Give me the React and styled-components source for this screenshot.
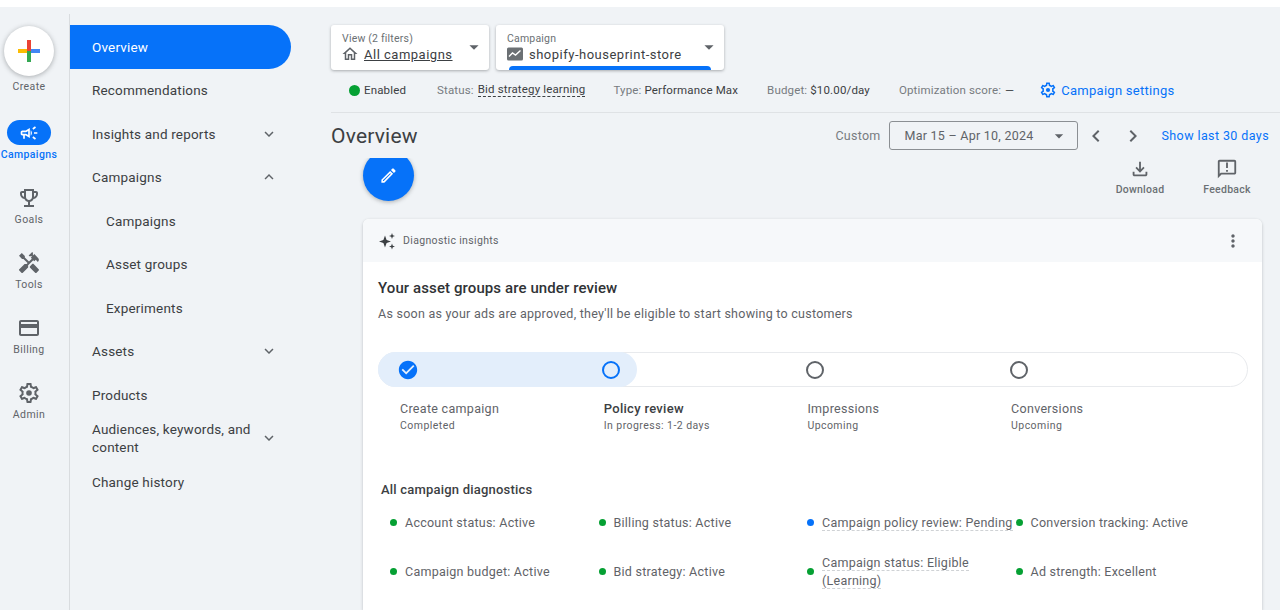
import React from "react";
import styled, { createGlobalStyle } from "styled-components";
import {
  MdArrowDropDown,
  MdCheckCircle,
  MdChevronLeft,
  MdChevronRight,
  MdHandyman,
  MdKeyboardArrowDown,
  MdKeyboardArrowUp,
  MdMoreVert,
  MdOutlineAnnouncement,
  MdOutlineCampaign,
  MdOutlineCreditCard,
  MdOutlineEdit,
  MdOutlineEmojiEvents,
  MdOutlineFileDownload,
  MdOutlineHome,
} from "react-icons/md";

const BLUE = "#0672f9";
const GREEN = "#05a033";

const GlobalStyle = createGlobalStyle`
  html, body {
    margin: 0;
    height: 610px;
    overflow: hidden;
    background: #ffffff;
    font-family: Roboto, "Liberation Sans", sans-serif;
    color: #3c4043;
  }
  * { box-sizing: border-box; }
`;

const Page = styled.div`
  display: flex;
  height: 603px;
  margin-top: 7px;
  background: #f0f3f6;
`;

const Rail = styled.aside`
  width: 70px;
  flex: none;
  display: flex;
  flex-direction: column;
  align-items: center;
  margin-top: 7px;
  padding: 12px 11px 0 0;
  border-right: 1px solid #d9dcdf;
`;

const CreateCircle = styled.div`
  width: 50px;
  height: 50px;
  flex: none;
  border-radius: 50%;
  background: #fff;
  box-shadow: 0 1px 5px rgba(60, 64, 67, 0.4);
  display: flex;
  align-items: center;
  justify-content: center;
`;

const RailLabel = styled.span`
  font-size: 10.5px;
  line-height: 14px;
  letter-spacing: 0.4px;
  white-space: nowrap;
  font-weight: ${(p) => (p.$active ? 500 : 400)};
  color: ${(p) => (p.$active ? BLUE : "#5f6368")};
`;

const CreateItem = styled.div`
  display: flex;
  flex-direction: column;
  align-items: center;
  gap: 4px;
`;

const RailItem = styled.div`
  height: 65px;
  display: flex;
  flex-direction: column;
  align-items: center;
  justify-content: flex-end;
  gap: 3px;
  color: #5f6368;
  font-size: 24px;
  & > svg { display: block; }
`;

const RailGroup = styled.div`
  display: flex;
  flex-direction: column;
  padding-top: 3px;
`;

const ActivePill = styled.div`
  width: 44px;
  height: 25px;
  border-radius: 13px;
  background: ${BLUE};
  color: #fff;
  display: flex;
  align-items: center;
  justify-content: center;
  font-size: 20px;
`;

const Nav = styled.nav`
  width: 261px;
  flex: none;
  padding-top: 18px;
  display: flex;
  flex-direction: column;
`;

const NavRow = styled.div`
  width: 221px;
  height: 43.5px;
  flex: none;
  display: flex;
  align-items: center;
  justify-content: space-between;
  padding: 0 13px 0 ${(p) => (p.$sub ? 36 : 22)}px;
  font-size: 13.5px;
  line-height: 18px;
  letter-spacing: 0.18px;
  font-weight: 400;
  color: ${(p) => (p.$active ? "#fff" : "#3c4043")};
  background: ${(p) => (p.$active ? BLUE : "transparent")};
  border-radius: ${(p) => (p.$active ? "0 22px 22px 0" : "0")};
  & > svg { flex: none; font-size: 18px; color: #5f6368; }
`;

const NavWrap = styled.span`
  width: 170px;
`;

const Main = styled.main`
  flex: 1;
  min-width: 0;
  display: flex;
  flex-direction: column;
`;

const Selectors = styled.div`
  display: flex;
  gap: 7px;
  padding-top: 18px;
`;

const Selector = styled.div`
  position: relative;
  overflow: hidden;
  width: ${(p) => p.$width}px;
  height: 45px;
  background: #fff;
  border-radius: 3px;
  box-shadow: 0 1px 3px rgba(60, 64, 67, 0.4);
  padding: 7px 0 0 11px;
  & > svg {
    position: absolute;
    right: 4px;
    top: 11px;
    font-size: 22px;
    color: #5f6368;
  }
`;

const SelectorLabel = styled.div`
  font-size: 10.5px;
  line-height: 13px;
  letter-spacing: 0.2px;
  color: #6b7074;
`;

const SelectorValue = styled.div`
  display: flex;
  align-items: center;
  gap: 5px;
  height: 18px;
  font-size: 13px;
  letter-spacing: 0.5px;
  font-weight: 400;
  color: #3c4043;
  & > svg { flex: none; color: #5f6368; font-size: 18px; margin-left: -1px; }
`;

const Underlined = styled.span`
  text-decoration: underline;
`;

const ActiveBar = styled.div`
  position: absolute;
  left: 13px;
  right: 13px;
  bottom: 0;
  height: 4px;
  border-radius: 4px 4px 0 0;
  background: ${BLUE};
`;

const StatusBar = styled.div`
  height: 43px;
  display: flex;
  align-items: center;
  padding: 0 0 2px 18px;
  border-bottom: 1px solid #dfe2e5;
  font-size: 11.5px;
  letter-spacing: 0.15px;
  color: #777b80;
`;

const StatusItem = styled.div`
  display: flex;
  align-items: center;
  gap: ${(p) => p.$inner}px;
  margin-right: ${(p) => p.$gap}px;
  white-space: pre;
`;

const EnabledDot = styled.span`
  width: 11px;
  height: 11px;
  border-radius: 50%;
  background: ${GREEN};
`;

const StatusValue = styled.span`
  color: #3c4043;
  ${(p) => p.$dotted && "border-bottom: 1px dashed #3c4043; line-height: 13px;"}
`;

const SettingsLink = styled.div`
  display: flex;
  align-items: center;
  gap: 4px;
  font-size: 13px;
  font-weight: 400;
  letter-spacing: 0.27px;
  color: ${BLUE};
`;

const TitleRow = styled.div`
  height: 45px;
  display: flex;
  align-items: center;
  padding-right: 11px;
`;

const PageTitle = styled.h1`
  flex: 1;
  margin: 0;
  font-size: 21px;
  font-weight: 400;
  letter-spacing: 0.2px;
  color: #3c4043;
`;

const CustomLabel = styled.span`
  font-size: 12.5px;
  letter-spacing: 0.25px;
  color: #777b80;
  margin-right: 8px;
`;

const DateBox = styled.div`
  width: 189px;
  height: 29px;
  border: 1px solid #8b8f93;
  border-radius: 3px;
  display: flex;
  align-items: center;
  justify-content: space-between;
  padding: 0 12px 0 15px;
  font-size: 12.5px;
  letter-spacing: 0.25px;
  color: #5f6368;
  & > svg { font-size: 20px; margin-right: -4px; }
`;

const Pager = styled.div`
  display: flex;
  gap: 13px;
  margin: 0 17px 0 6px;
  color: #5f6368;
  font-size: 24px;
  & > svg { display: block; }
`;

const LastDays = styled.span`
  font-size: 12.5px;
  font-weight: 400;
  letter-spacing: 0.4px;
  color: ${BLUE};
`;

const ActionRow = styled.div`
  height: 61px;
  display: flex;
  justify-content: space-between;
  padding: 0 25px 0 27px;
`;

const FabClip = styled.div`
  width: 61px;
  height: 51px;
  padding: 0 5px;
  overflow: hidden;
  flex: none;
`;

const Fab = styled.div`
  width: 51px;
  height: 51px;
  margin-top: -8px;
  border-radius: 50%;
  background: ${BLUE};
  box-shadow: 0 1px 4px rgba(60, 64, 67, 0.4);
  color: #fff;
  display: flex;
  align-items: center;
  justify-content: center;
  font-size: 19px;
`;

const Actions = styled.div`
  display: flex;
  gap: 31px;
`;

const ActionButton = styled.div`
  width: 56px;
  display: flex;
  flex-direction: column;
  align-items: center;
  gap: 3px;
  font-size: 10.5px;
  line-height: 14px;
  font-weight: 500;
  letter-spacing: 0.25px;
  color: #6b7074;
  & > svg { font-size: 22px; color: #5f6368; display: block; }
`;

const Card = styled.section`
  margin: 0 18px 0 32px;
  flex: 1;
  background: #fff;
  border-radius: 6px 6px 0 0;
  box-shadow: 0 1px 3px rgba(60, 64, 67, 0.3);
  overflow: hidden;
`;

const CardHeader = styled.header`
  height: 43px;
  background: #f6f8fa;
  display: flex;
  align-items: center;
  padding: 0 23px 0 15px;
  gap: 7px;
  font-size: 10.5px;
  letter-spacing: 0.35px;
  color: #5f6368;
`;

const HeaderSpacer = styled.span`
  flex: 1;
`;

const MoreIcon = styled(MdMoreVert)`
  font-size: 20px;
  color: #5f6368;
  margin-right: -4px;
`;

const CardBody = styled.div`
  padding: 16px 14px 0 15px;
`;

const CardTitle = styled.h2`
  margin: 0;
  font-size: 15px;
  line-height: 20px;
  font-weight: 500;
  letter-spacing: 0.1px;
  color: #303336;
`;

const CardText = styled.p`
  margin: 6px 0 0;
  font-size: 12.5px;
  line-height: 20px;
  letter-spacing: 0.25px;
  color: #5f6368;
`;

const Stepper = styled.div`
  position: relative;
  margin-top: 28px;
  height: 35px;
  border-radius: 18px;
  border: 1px solid #e8eaed;
  display: grid;
  grid-template-columns: repeat(4, 203.7px);
  padding-left: 19.5px;
  align-items: center;
`;

const StepFill = styled.div`
  position: absolute;
  left: -1px;
  top: -1px;
  bottom: -1px;
  width: 259px;
  border-radius: 18px;
  background: #e3eefb;
`;

const StepCell = styled.div`
  position: relative;
  display: flex;
  align-items: center;
  height: 20px;
`;

const StepCheck = styled(MdCheckCircle)`
  font-size: 22px;
  margin-left: -1.5px;
  color: ${BLUE};
`;

const StepCircle = styled.span`
  width: 18px;
  height: 18px;
  border-radius: 50%;
  border: 2px solid ${(p) => (p.$active ? BLUE : "#5f6368")};
`;

const StepLabels = styled.div`
  display: grid;
  grid-template-columns: repeat(4, 203.7px);
  padding-left: 22px;
  margin-top: 13px;
`;

const StepName = styled.div`
  font-size: ${(p) => (p.$active ? 13 : 12.5)}px;
  line-height: 18px;
  letter-spacing: 0.3px;
  font-weight: ${(p) => (p.$active ? 500 : 400)};
  color: ${(p) => (p.$active ? "#3c4043" : "#5f6368")};
`;

const StepNote = styled.div`
  margin-top: 1px;
  font-size: 10.5px;
  line-height: 14px;
  letter-spacing: 0.45px;
  color: #5f6368;
`;

const DiagTitle = styled.h3`
  margin: 49px 0 0 3px;
  font-size: 13px;
  line-height: 16px;
  font-weight: 500;
  letter-spacing: 0.2px;
  color: #3c4043;
`;

const DiagGrid = styled.div`
  display: grid;
  grid-template-columns: repeat(4, 208.5px);
  grid-auto-rows: 49px;
  margin-left: 12px;
`;

const DiagItem = styled.div`
  display: flex;
  align-items: center;
  gap: 8px;
  font-size: 12.5px;
  line-height: 18px;
  letter-spacing: 0.25px;
  color: #5f6368;
`;

const DiagDot = styled.span`
  flex: none;
  width: 7px;
  height: 7px;
  border-radius: 50%;
  background: ${(p) => (p.$pending ? BLUE : GREEN)};
`;

const DiagText = styled.span`
  white-space: ${(p) => (p.$wrap ? "normal" : "nowrap")};
  width: ${(p) => (p.$wrap ? "165px" : "auto")};
`;

const Dotted = styled.span`
  border-bottom: 1px dashed #cfd2d5;
`;

const PlusLogo = () => (
  <svg width="24" height="24" viewBox="0 0 24 24">
    <rect x="1" y="10" width="11" height="4" fill="#fbbc04" />
    <rect x="12" y="10" width="11" height="4" fill="#4285f4" />
    <rect x="10" y="1" width="4" height="11" fill="#ea4335" />
    <rect x="10" y="12" width="4" height="11" fill="#34a853" />
  </svg>
);

// outlined gear with a solid hub, the package only has it with an empty one
const GearIcon = ({ size = 24 }) => (
  <svg width={size} height={size} viewBox="0 0 24 24" fill="currentColor">
    <path d="M19.43 12.98c.04-.32.07-.64.07-.98 0-.34-.03-.66-.07-.98l2.11-1.65c.19-.15.24-.42.12-.64l-2-3.46c-.09-.16-.26-.25-.44-.25-.06 0-.12.01-.17.03l-2.49 1c-.52-.4-1.08-.73-1.69-.98l-.38-2.65C14.46 2.18 14.25 2 14 2h-4c-.25 0-.46.18-.49.42l-.38 2.65c-.61.25-1.17.59-1.69.98l-2.49-1c-.06-.02-.12-.03-.18-.03-.17 0-.34.09-.43.25l-2 3.46c-.13.22-.07.49.12.64l2.11 1.65c-.04.32-.07.65-.07.98 0 .33.03.66.07.98l-2.11 1.65c-.19.15-.24.42-.12.64l2 3.46c.09.16.26.25.44.25.06 0 .12-.01.17-.03l2.49-1c.52.4 1.08.73 1.69.98l.38 2.65c.03.24.24.42.49.42h4c.25 0 .46-.18.49-.42l.38-2.65c.61-.25 1.17-.59 1.69-.98l2.49 1c.06.02.12.03.18.03.17 0 .34-.09.43-.25l2-3.46c.12-.22.07-.49-.12-.64l-2.11-1.65zm-1.98-1.71c.04.31.05.52.05.73 0 .21-.02.43-.05.73l-.14 1.13.89.7 1.08.84-.7 1.21-1.27-.51-1.04-.42-.9.68c-.43.32-.84.56-1.25.73l-1.06.43-.16 1.13-.2 1.35h-1.4l-.19-1.35-.16-1.13-1.06-.43c-.43-.18-.83-.41-1.23-.71l-.91-.7-1.06.43-1.27.51-.7-1.21 1.08-.84.89-.7-.14-1.13c-.03-.31-.05-.54-.05-.74s.02-.43.05-.73l.14-1.13-.89-.7-1.08-.84.7-1.21 1.27.51 1.04.42.9-.68c.43-.32.84-.56 1.25-.73l1.06-.43.16-1.13.2-1.35h1.39l.19 1.35.16 1.13 1.06.43c.43.18.83.41 1.23.71l.91.7 1.06-.43 1.27-.51.7 1.21-1.07.85-.89.7.14 1.13z" />
    <circle cx="12" cy="12" r="2.8" />
  </svg>
);

const ChartIcon = () => (
  <svg width="18" height="18" viewBox="0 0 18 18">
    <rect x="1" y="2.5" width="16" height="13" rx="1.5" fill="#6b7074" />
    <path d="M3 11.5l3.5-3.5 3 2 5-4.5" fill="none" stroke="#fff" strokeWidth="1.4" />
  </svg>
);

const SparkIcon = () => (
  <svg width="18" height="18" viewBox="0 0 18 18" fill="#3c4043">
    <path d="M7 3.5l1.6 4.4L13 9.5l-4.4 1.6L7 15.5l-1.6-4.4L1 9.5l4.4-1.6z" />
    <path d="M14 1l.8 2.2 2.2.8-2.2.8L14 7l-.8-2.2-2.2-.8 2.2-.8z" />
    <path d="M14 11.5l.8 2.2 2.2.8-2.2.8-.8 2.2-.8-2.2-2.2-.8 2.2-.8z" />
  </svg>
);

const navItems = [
  { label: "Overview", active: true },
  { label: "Recommendations" },
  { label: "Insights and reports", icon: "down" },
  { label: "Campaigns", icon: "up" },
  { label: "Campaigns", sub: true },
  { label: "Asset groups", sub: true },
  { label: "Experiments", sub: true },
  { label: "Assets", icon: "down" },
  { label: "Products" },
  { label: "Audiences, keywords, and content", icon: "down", wrap: true },
  { label: "Change history" },
];

const railItems = [
  { label: "Goals", Icon: MdOutlineEmojiEvents },
  { label: "Tools", Icon: MdHandyman },
  { label: "Billing", Icon: MdOutlineCreditCard },
  { label: "Admin", Icon: GearIcon },
];

const steps = [
  { name: "Create campaign", note: "Completed" },
  { name: "Policy review", note: "In progress: 1-2 days", active: true },
  { name: "Impressions", note: "Upcoming" },
  { name: "Conversions", note: "Upcoming" },
];

const diagnostics = [
  { text: "Account status: Active" },
  { text: "Billing status: Active" },
  { text: "Campaign policy review: Pending", pending: true, dotted: true },
  { text: "Conversion tracking: Active" },
  { text: "Campaign budget: Active" },
  { text: "Bid strategy: Active" },
  { text: "Campaign status: Eligible (Learning)", dotted: true, wrap: true },
  { text: "Ad strength: Excellent" },
];

export default function App() {
  return (
    <>
      <GlobalStyle />
      <Page>
        <Rail>
          <CreateItem>
            <CreateCircle>
              <PlusLogo />
            </CreateCircle>
            <RailLabel>Create</RailLabel>
          </CreateItem>
          <RailGroup>
            <RailItem>
              <ActivePill>
                <MdOutlineCampaign />
              </ActivePill>
              <RailLabel $active>Campaigns</RailLabel>
            </RailItem>
            {railItems.map(({ label, Icon }) => (
              <RailItem key={label}>
                <Icon />
                <RailLabel>{label}</RailLabel>
              </RailItem>
            ))}
          </RailGroup>
        </Rail>
        <Nav>
          {navItems.map((item, i) => (
            <NavRow key={i} $active={item.active} $sub={item.sub}>
              {item.wrap ? <NavWrap>{item.label}</NavWrap> : <span>{item.label}</span>}
              {item.icon === "down" && <MdKeyboardArrowDown />}
              {item.icon === "up" && <MdKeyboardArrowUp />}
            </NavRow>
          ))}
        </Nav>
        <Main>
          <Selectors>
            <Selector $width={158}>
              <SelectorLabel>View (2 filters)</SelectorLabel>
              <SelectorValue>
                <MdOutlineHome />
                <Underlined>All campaigns</Underlined>
              </SelectorValue>
              <MdArrowDropDown />
            </Selector>
            <Selector $width={228}>
              <SelectorLabel>Campaign</SelectorLabel>
              <SelectorValue>
                <ChartIcon />
                <span>shopify-houseprint-store</span>
              </SelectorValue>
              <MdArrowDropDown />
              <ActiveBar />
            </Selector>
          </Selectors>
          <StatusBar>
            <StatusItem $gap={31} $inner={4}>
              <EnabledDot />
              <StatusValue>Enabled</StatusValue>
            </StatusItem>
            <StatusItem $gap={28} $inner={4}>
              Status:
              <StatusValue $dotted>Bid strategy learning</StatusValue>
            </StatusItem>
            <StatusItem $gap={29} $inner={3}>
              Type:
              <StatusValue>Performance Max</StatusValue>
            </StatusItem>
            <StatusItem $gap={29} $inner={3}>
              Budget:
              <StatusValue>$10.00/day</StatusValue>
            </StatusItem>
            <StatusItem $gap={25} $inner={4}>
              Optimization score:
              <StatusValue>—</StatusValue>
            </StatusItem>
            <SettingsLink>
              <GearIcon size={18} />
              Campaign settings
            </SettingsLink>
          </StatusBar>
          <TitleRow>
            <PageTitle>Overview</PageTitle>
            <CustomLabel>Custom</CustomLabel>
            <DateBox>
              Mar 15 – Apr 10, 2024
              <MdArrowDropDown />
            </DateBox>
            <Pager>
              <MdChevronLeft />
              <MdChevronRight />
            </Pager>
            <LastDays>Show last 30 days</LastDays>
          </TitleRow>
          <ActionRow>
            <FabClip>
              <Fab>
                <MdOutlineEdit />
              </Fab>
            </FabClip>
            <Actions>
              <ActionButton>
                <MdOutlineFileDownload />
                Download
              </ActionButton>
              <ActionButton>
                <MdOutlineAnnouncement />
                Feedback
              </ActionButton>
            </Actions>
          </ActionRow>
          <Card>
            <CardHeader>
              <SparkIcon />
              Diagnostic insights
              <HeaderSpacer />
              <MoreIcon />
            </CardHeader>
            <CardBody>
              <CardTitle>Your asset groups are under review</CardTitle>
              <CardText>
                As soon as your ads are approved, they'll be eligible to start showing to customers
              </CardText>
              <Stepper>
                <StepFill />
                {steps.map((step, i) => (
                  <StepCell key={step.name}>
                    {i === 0 ? <StepCheck /> : <StepCircle $active={step.active} />}
                  </StepCell>
                ))}
              </Stepper>
              <StepLabels>
                {steps.map((step) => (
                  <div key={step.name}>
                    <StepName $active={step.active}>{step.name}</StepName>
                    <StepNote>{step.note}</StepNote>
                  </div>
                ))}
              </StepLabels>
              <DiagTitle>All campaign diagnostics</DiagTitle>
              <DiagGrid>
                {diagnostics.map((d) => (
                  <DiagItem key={d.text}>
                    <DiagDot $pending={d.pending} />
                    <DiagText $wrap={d.wrap}>
                      {d.dotted ? <Dotted>{d.text}</Dotted> : d.text}
                    </DiagText>
                  </DiagItem>
                ))}
              </DiagGrid>
            </CardBody>
          </Card>
        </Main>
      </Page>
    </>
  );
}
